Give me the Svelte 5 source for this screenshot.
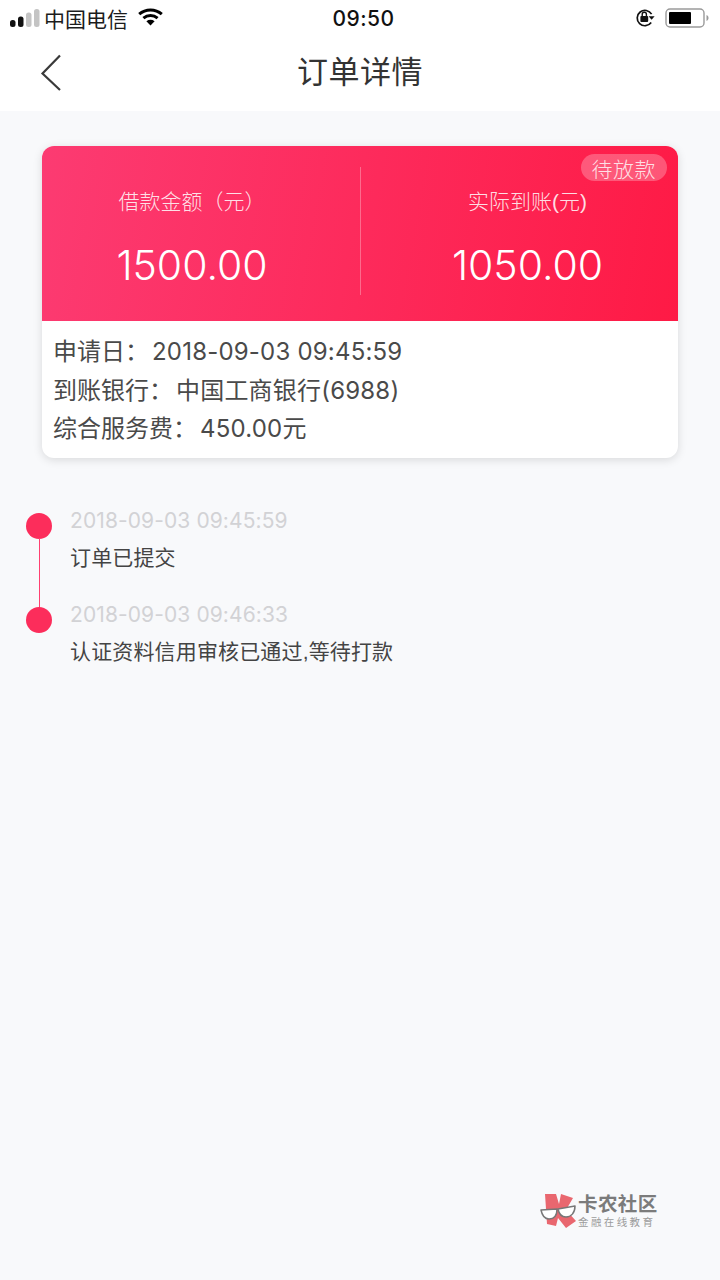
<script>
  const details = [
    { label: '申请日:', value: '2018-09-03 09:45:59' },
    { label: '到账银行:', value: '中国工商银行(6988)' },
    { label: '综合服务费:', value: '450.00元' }
  ]

  const steps = [
    { time: '2018-09-03 09:45:59', text: '订单已提交' },
    { time: '2018-09-03 09:46:33', text: '认证资料信用审核已通过,等待打款' }
  ]
</script>

<div class="page">
  <header class="status">
    <div class="status__left">
      <svg class="signal" width="30" height="18" viewBox="0 0 30 18">
        <rect x="0" y="11" width="5.5" height="7" rx="2.5" fill="#111" />
        <rect x="8" y="7.5" width="5.5" height="10.5" rx="2.5" fill="#111" />
        <rect x="16" y="3.5" width="5.5" height="14.5" rx="2.5" fill="#c4c4c4" />
        <rect x="24" y="0" width="5.5" height="18" rx="2.5" fill="#c4c4c4" />
      </svg>
      <span class="carrier">中国电信</span>
      <svg class="wifi" width="25" height="18" viewBox="0 0 25 18" fill="none" stroke="#000" stroke-width="3">
        <path d="M1.2 6.2C7.6 .6 17.4 .6 23.8 6.2" />
        <path d="M5.4 10.2C9.6 6.6 15.4 6.6 19.6 10.2" />
        <path d="M12.5 17.5L8.4 13.2C10.8 11.4 14.2 11.4 16.6 13.2Z" fill="#000" stroke="none" />
      </svg>
    </div>
    <span class="clock">09:50</span>
    <div class="status__right">
      <svg class="lock" width="21" height="20" viewBox="0 0 21 20" fill="none">
        <path d="M16.2 14.5A7.7 7.7 0 1 1 16.6 6.2" stroke="#111" stroke-width="1.7" />
        <path d="M13.6 8.2h6l-3 3.6z" fill="#111" />
        <rect x="5.4" y="8" width="7.8" height="6" rx="1" fill="#111" />
        <path d="M7.2 8V6.4a2.1 2.1 0 0 1 4.2 0V8" stroke="#111" stroke-width="1.4" />
      </svg>
      <svg class="battery" width="44" height="20" viewBox="0 0 44 20" fill="none">
        <rect x="1" y="1" width="38" height="18" rx="4" stroke="#9a9a9a" stroke-width="1.4" />
        <rect x="4" y="4" width="22" height="12" rx="1" fill="#000" />
        <path d="M41.5 7v6c1.2-.4 2-1.6 2-3s-.8-2.6-2-3z" fill="#9a9a9a" />
      </svg>
    </div>
  </header>

  <nav class="nav">
    <svg class="nav__back" width="24" height="40" viewBox="0 0 24 40" fill="none">
      <path d="M20 2.5L2.5 20.5L20 37" stroke="#3a3a3a" stroke-width="2.2" />
    </svg>
    <h1 class="nav__title">订单详情</h1>
  </nav>

  <main class="content">
    <section class="card">
      <div class="card__head">
        <span class="badge">待放款</span>
        <div class="amount amount--left">
          <div class="amount__label">借款金额（元）</div>
          <div class="amount__value">1500.00</div>
        </div>
        <div class="card__rule"></div>
        <div class="amount amount--right">
          <div class="amount__label">实际到账(元)</div>
          <div class="amount__value">1050.00</div>
        </div>
      </div>
      <div class="card__body">
        {#each details as row}
          <div class="row">
            <span>{row.label.replace(':', '：')}</span><span class="row__value">{row.value}</span>
          </div>
        {/each}
      </div>
    </section>

    <ul class="timeline">
      {#each steps as step, i}
        <li class="step">
          <div class="step__rail">
            <span class="step__dot"></span>
            {#if i < steps.length - 1}<span class="step__line"></span>{/if}
          </div>
          <div class="step__copy">
            <div class="step__time">{step.time}</div>
            <div class="step__text">{step.text}</div>
          </div>
        </li>
      {/each}
    </ul>
  </main>

  <footer class="mark">
    <svg class="mark__logo" width="38" height="40" viewBox="0 0 38 40">
      <!-- K with a pair of glasses across it -->
      <path d="M5 4L16 4L19 14L21 4L33 8L26 20L36 31L26 38L18 28L16 36L7 34Z" fill="#e9676f" />
      <path d="M1 20L17 19C17 26 14 29 9 29C4 29 2 25 1 20Z" fill="#fff" stroke="#777" stroke-width="1.5" stroke-linejoin="round" />
      <path d="M18 19L35 16C35 23 31 27 26 27C21 27 19 24 18 19Z" fill="#fff" stroke="#777" stroke-width="1.5" stroke-linejoin="round" />
    </svg>
    <div class="mark__copy">
      <div class="mark__name">卡农社区</div>
      <div class="mark__tag">金融在线教育</div>
    </div>
  </footer>
</div>

<style>
  :global(body) {
    margin: 0;
    background: #f8f9fb;
  }

  .page {
    width: 720px;
    height: 1280px;
    display: flex;
    flex-direction: column;
    background: #f8f9fb;
    color: #3c3c3c;
    font-family: 'Liberation Sans', 'Noto Sans CJK SC', sans-serif;
    overflow: hidden;
  }

  .status {
    height: 36px;
    flex-shrink: 0;
    display: grid;
    grid-template-columns: 1fr auto 1fr;
    align-items: center;
    background: #fff;
    padding: 0 10px;
    box-sizing: border-box;
  }

  .status__left {
    display: flex;
    align-items: center;
    gap: 4px;
  }

  .status__right {
    display: flex;
    align-items: center;
    justify-content: flex-end;
    gap: 9px;
    padding-right: 1px;
  }

  .carrier {
    font-size: 21px;
    color: #1c1c1c;
  }

  .wifi {
    margin-left: 6px;
    margin-top: -2px;
  }

  .clock {
    margin-left: 7px;
    font-family: Inter, 'Liberation Sans', sans-serif;
    font-size: 21px;
    font-weight: 500;
    letter-spacing: 0.5px;
    color: #111;
  }

  .nav {
    height: 75px;
    flex-shrink: 0;
    position: relative;
    display: flex;
    align-items: center;
    justify-content: center;
    background: #fff;
  }

  .nav__back {
    position: absolute;
    left: 40px;
    top: 17px;
  }

  .nav__title {
    margin: 0;
    padding-bottom: 8px;
    font-size: 31px;
    font-weight: 400;
    letter-spacing: 0.5px;
    color: #333;
  }

  .content {
    flex: 1;
    padding-top: 35px;
  }

  .card {
    width: 636px;
    margin-left: 42px;
    border-radius: 12px;
    background: #fff;
    box-shadow: 0 2px 10px rgb(0 0 0 / 0.13);
    overflow: hidden;
  }

  .card__head {
    height: 175px;
    position: relative;
    display: grid;
    grid-template-columns: 318px 1px 317px;
    background: linear-gradient(100deg, #fc3b72 0%, #fe1a45 100%);
    color: #fff;
  }

  .card__rule {
    margin: 21px 0 26px;
    background: rgb(255 255 255 / 0.3);
  }

  .badge {
    position: absolute;
    top: 8px;
    right: 11px;
    height: 27px;
    padding: 0 11px;
    display: flex;
    align-items: center;
    border-radius: 14px;
    background: rgb(255 255 255 / 0.26);
    font-size: 21px;
    font-weight: 300;
    letter-spacing: 0.5px;
    color: rgb(255 255 255 / 0.82);
  }

  .amount {
    display: flex;
    flex-direction: column;
    align-items: center;
    padding-top: 42px;
  }

  .amount--left {
    padding-right: 18px;
  }

  .amount--right {
    padding-left: 16px;
  }

  .amount__label {
    font-size: 21px;
    line-height: 28px;
    font-weight: 300;
    color: rgb(255 255 255 / 0.85);
  }

  .amount__value {
    margin-top: 23px;
    font-family: Inter, 'Liberation Sans', sans-serif;
    font-size: 41px;
    font-weight: 300;
    line-height: 52px;
  }

  .card__body {
    padding: 12px 11px 9px;
    font-size: 24px;
    line-height: 38.5px;
    color: #4a4a4a;
  }

  .row__value {
    margin-left: 3px;
    font-family: Inter, 'Noto Sans CJK SC', sans-serif;
    letter-spacing: 0.2px;
  }

  .timeline {
    list-style: none;
    margin: 48px 0 0;
    padding: 0 0 0 26px;
  }

  .step {
    display: flex;
    height: 94px;
  }

  .step__rail {
    width: 26px;
    position: relative;
    flex-shrink: 0;
    padding-top: 7px;
  }

  .step__dot {
    display: block;
    width: 26px;
    height: 26px;
    border-radius: 50%;
    background: #fc2d5b;
  }

  .step__line {
    position: absolute;
    left: 13px;
    top: 32px;
    width: 1px;
    height: 72px;
    background: #ff4070;
  }

  .step__copy {
    margin-left: 18px;
    padding-top: 1px;
  }

  .step__time {
    font-family: Inter, 'Liberation Sans', sans-serif;
    font-weight: 400;
    font-size: 21px;
    line-height: 28px;
    letter-spacing: 0.1px;
    color: #d2d2d5;
  }

  .step__text {
    margin-top: 9px;
    font-size: 21px;
    line-height: 28px;
    letter-spacing: 0.15px;
    color: #444;
  }

  .mark {
    position: absolute;
    top: 1190px;
    left: 540px;
    display: flex;
    gap: 0;
  }

  .mark__copy {
    padding-top: 3px;
  }

  .mark__name {
    font-size: 19.5px;
    line-height: 22px;
    font-weight: 700;
    letter-spacing: 0.4px;
    color: #7b7b7b;
  }

  .mark__tag {
    font-size: 10.5px;
    line-height: 14px;
    letter-spacing: 2.4px;
    color: #9c9c9c;
  }
</style>
